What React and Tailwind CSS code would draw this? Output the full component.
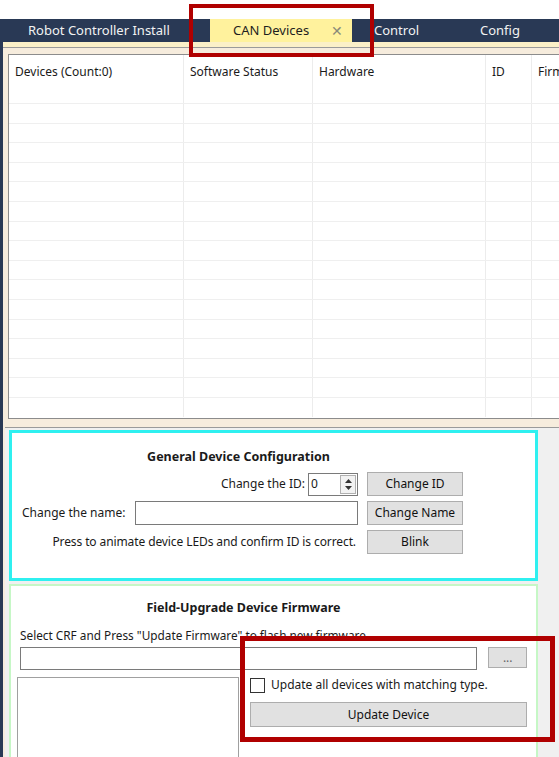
import React from "react";

const font = { fontFamily: '"Noto Sans", "Open Sans", sans-serif' };

const cols = [
  { label: "Devices (Count:0)", w: "w-[175px]" },
  { label: "Software Status", w: "w-[129px]" },
  { label: "Hardware", w: "w-[173px]" },
  { label: "ID", w: "w-[46px]" },
  { label: "Firmware", w: "w-[60px]" },
];

const rows = Array.from({ length: 16 });

function Btn({ children, className = "" }) {
  return (
    <div
      className={
        "flex items-center justify-center border border-[#adadad] bg-[#e1e1e1] text-[12px] text-[#111] " +
        className
      }
    >
      {children}
    </div>
  );
}

export default function App() {
  return (
    <div
      className="relative w-[559px] h-[757px] overflow-hidden bg-white text-[#1a1a1a]"
      style={font}
    >
      <div className="h-[19px] bg-white" />

      {/* tab strip */}
      <div className="flex h-[23px] bg-[#293955] text-[13px] text-[#f2f2f2]">
        <div className="pl-[28px] w-[210px] shrink-0 flex items-center">Robot Controller Install</div>
        <div className="w-[142px] shrink-0 bg-[#fff29d] text-[#1e1e1e] flex items-center pl-[23px]">
          <span>CAN Devices</span>
          <span className="ml-[22px] text-[#8a8a7a] text-[14px] leading-none">✕</span>
        </div>
        <div className="pl-[22px] w-[128px] shrink-0 flex items-center">Control</div>
        <div className="flex items-center">Config</div>
      </div>

      <div className="flex h-[715px]">
        <div className="w-[3px] shrink-0 bg-[#293955]" />
        <div className="flex-1 min-w-0 bg-[#f0f0f0] flex flex-col">
          {/* tab content top edge */}
          <div className="h-[5px] bg-[#fbf0c8]" />
          <div className="h-[1px] bg-[#9a9a9a]" />
          <div className="flex flex-1 flex-col pl-[2px] bg-[#f6ecdd] overflow-hidden">
            {/* table */}
            <div className="mt-[6px] ml-[3px] border-l border-t border-b border-[#8c8c8c] bg-white h-[365px] shrink-0 overflow-hidden">
              <div className="flex h-[48px] text-[12px]">
                {cols.map((c, i) => (
                  <div
                    key={i}
                    className={c.w + " shrink-0 border-r border-[#ececec] pl-[6px] pt-[8px] whitespace-nowrap"}
                  >
                    {c.label}
                  </div>
                ))}
              </div>
              {rows.map((_, r) => (
                <div key={r} className="flex h-[19.6px] border-t border-[#efefef]">
                  {cols.map((c, i) => (
                    <div key={i} className={c.w + " shrink-0 border-r border-[#ececec]"} />
                  ))}
                </div>
              ))}
            </div>
            <div className="h-[8px] shrink-0" />
            <div className="h-[1px] shrink-0 bg-[#9a9a9a]" />
            <div className="flex-1 bg-[#f0f0f0] pt-[2px] pl-[4px] flex flex-col">
              {/* General config */}
              <div className="w-[529px] h-[151px] shrink-0 border-[3px] border-[#2ff0f0] bg-white flex flex-col text-[12px]">
                <div className="text-center font-bold text-[12.5px] mt-[15px] pr-[70px]">
                  General Device Configuration
                </div>
                <div className="flex items-center mt-[5px] h-[25px]">
                  <div className="w-[296px] text-right pr-[3px] whitespace-nowrap">Change the ID:</div>
                  <div className="w-[50px] h-[23px] border border-[#7a7a7a] flex items-center justify-between pl-[2px]">
                    <span>0</span>
                    <div className="w-[16px] h-[19px] mr-[1px] border border-[#b0b0b0] bg-[#f2f2f2] flex flex-col items-center justify-center gap-[3px]">
                      <svg width="7" height="4" viewBox="0 0 7 4"><path d="M0 4 L3.5 0 L7 4Z" fill="#333" /></svg>
                      <svg width="7" height="4" viewBox="0 0 7 4"><path d="M0 0 L3.5 4 L7 0Z" fill="#333" /></svg>
                    </div>
                  </div>
                  <Btn className="ml-[9px] w-[96px] h-[24px]">Change ID</Btn>
                </div>
                <div className="flex items-center mt-[4px] h-[25px]">
                  <div className="w-[123px] pl-[10px] whitespace-nowrap">Change the name:</div>
                  <div className="w-[223px] h-[24px] border border-[#7a7a7a]" />
                  <Btn className="ml-[9px] w-[96px] h-[24px]">Change Name</Btn>
                </div>
                <div className="flex items-center mt-[4px] h-[25px]">
                  <div className="w-[346px] text-right whitespace-nowrap pr-[2px] tracking-[-0.1px]">
                    Press to animate device LEDs and confirm ID is correct.
                  </div>
                  <Btn className="ml-[9px] w-[96px] h-[24px]">Blink</Btn>
                </div>
              </div>

              {/* Firmware */}
              <div className="mt-[3px] w-[529px] flex-1 border-[2px] border-b-0 border-[#c6f7c6] bg-white flex flex-col text-[12px] px-[9px]">
                <div className="text-center font-bold text-[12.5px] mt-[13px] pr-[60px]">
                  Field-Upgrade Device Firmware
                </div>
                <div className="mt-[9px] whitespace-nowrap text-[11.8px]">
                  Select CRF and Press "Update Firmware" to flash new firmware.
                </div>
                <div className="flex mt-[3px]">
                  <div className="w-[463px] h-[23px] border border-[#7a7a7a]" />
                  <Btn className="ml-[11px] w-[39px] h-[21px] text-[#666]">...</Btn>
                </div>
                <div className="flex mt-[7px] flex-1">
                  <div className="w-[227px] -ml-[3px] border border-b-0 border-[#a0a0a0]" />
                  <div className="ml-[11px] flex flex-col">
                    <div className="flex items-center h-[16px]">
                      <div className="w-[15px] h-[15px] border border-[#333] bg-white" />
                      <span className="ml-[6px] whitespace-nowrap">Update all devices with matching type.</span>
                    </div>
                    <Btn className="mt-[9px] w-[277px] h-[25px]">Update Device</Btn>
                  </div>
                </div>
              </div>
            </div>
          </div>
        </div>
      </div>

      {/* annotation boxes */}
      <div className="absolute left-[189px] top-[4px] w-[185px] h-[53px] border-[4px] border-[#b00000]" />
      <div className="absolute left-[240px] top-[636px] w-[315px] h-[106px] border-[5px] border-[#b00000]" />
    </div>
  );
}
